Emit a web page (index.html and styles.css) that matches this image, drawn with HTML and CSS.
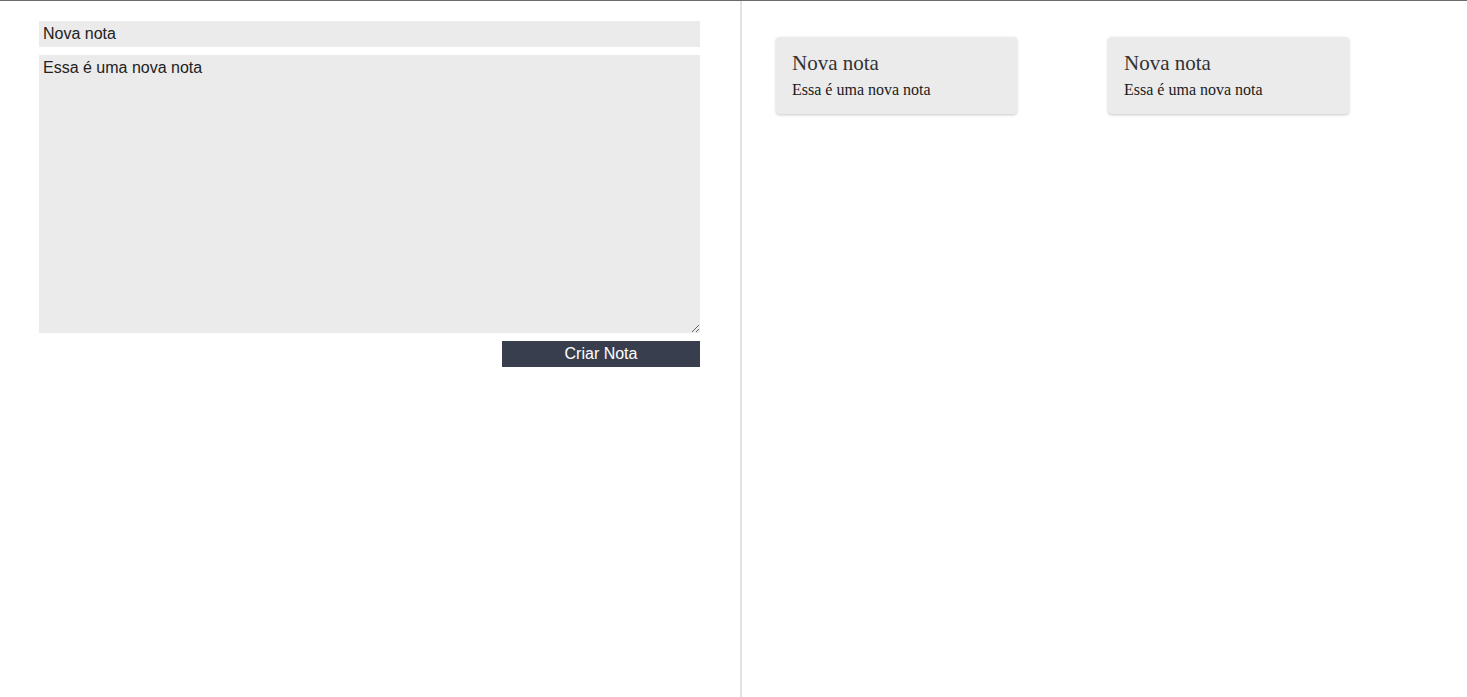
FILE: index.html
```html
<!DOCTYPE html>
<html lang="pt">
<head>
<meta charset="utf-8">
<title>Notas</title>
<link rel="stylesheet" href="styles.css">
</head>
<body>
<div class="app">
  <section class="editor">
    <form class="note-form">
      <input class="note-title" type="text" value="Nova nota">
      <textarea class="note-body">Essa é uma nova nota</textarea>
      <button class="note-submit" type="button">Criar Nota</button>
    </form>
  </section>
  <section class="notes">
    <article class="card">
      <h3 class="card-title">Nova nota</h3>
      <p class="card-text">Essa é uma nova nota</p>
    </article>
    <article class="card">
      <h3 class="card-title">Nova nota</h3>
      <p class="card-text">Essa é uma nova nota</p>
    </article>
  </section>
</div>
</body>
</html>
```

FILE: styles.css
```css
html, body {
  margin: 0;
  padding: 0;
  height: 100%;
  background: #fff;
}
body {
  font-family: "Liberation Serif", "Times New Roman", serif;
}
.app {
  display: flex;
  height: 100%;
  box-sizing: border-box;
  border-top: 1px solid #6b6b6b;
}
.editor {
  width: 742px;
  flex: none;
  box-sizing: border-box;
  padding: 20px 40px 0 39px;
  border-right: 2px solid #e2e2e2;
}
.note-form {
  display: flex;
  flex-direction: column;
}
.note-title,
.note-body {
  font-family: "Liberation Sans", Arial, sans-serif;
  font-size: 16px;
  color: #222;
  background: #ebebeb;
  border: none;
  outline: none;
  margin: 0;
  box-sizing: border-box;
  width: 100%;
}
.note-title {
  height: 26px;
  padding: 0 4px;
}
.note-body {
  margin-top: 8px;
  height: 278px;
  padding: 4px 4px;
  resize: vertical;
  line-height: normal;
}
.note-submit {
  align-self: flex-end;
  margin-top: 8px;
  width: 198px;
  height: 26px;
  border: none;
  background: #393e4f;
  color: #fff;
  font-family: "Liberation Sans", Arial, sans-serif;
  font-size: 16px;
  padding: 0;
}
.notes {
  flex: 1;
  display: flex;
  align-items: flex-start;
  gap: 91px;
  padding: 36px 34px;
}
.card {
  width: 241px;
  height: 77px;
  box-sizing: border-box;
  padding: 14px 16px 0;
  background: #ebebeb;
  border-radius: 4px;
  box-shadow: 0 1px 3px rgba(0, 0, 0, 0.22);
}
.card-title {
  margin: 0 0 5px;
  font-size: 21px;
  font-weight: normal;
  color: #333;
  line-height: normal;
}
.card-text {
  margin: 0;
  font-size: 16px;
  color: #1a1a1a;
  line-height: normal;
}
```
